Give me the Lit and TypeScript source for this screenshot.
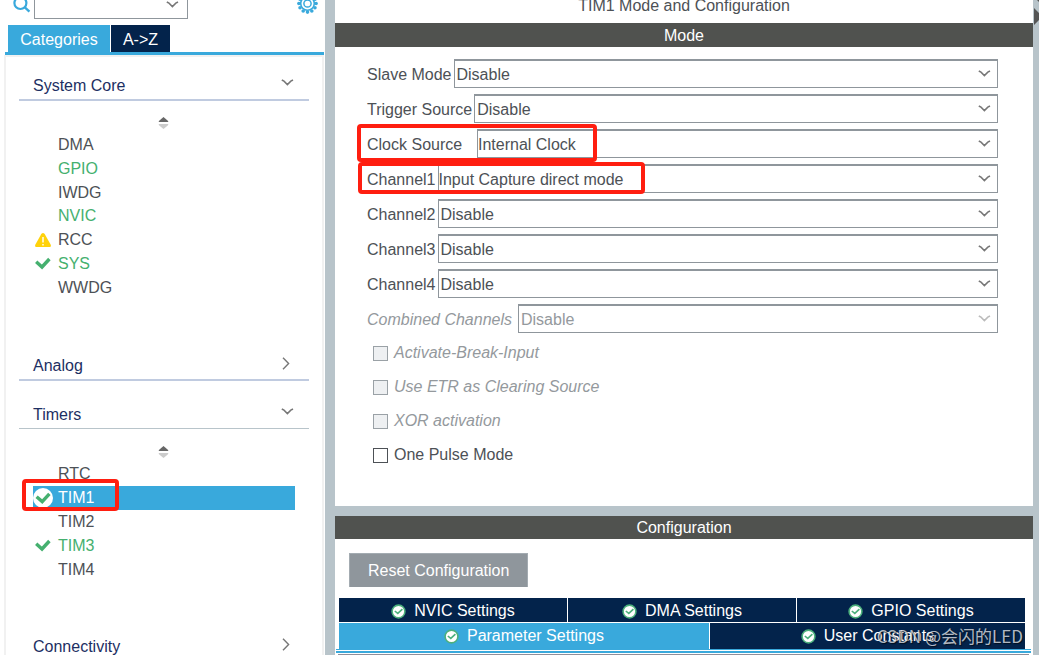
import { LitElement, html, css, svg, nothing } from "lit";
import { customElement, property, state } from "lit/decorators.js";
import { classMap } from "lit/directives/class-map.js";

type Status = "none" | "ok" | "warn";

interface Peripheral {
  name: string;
  enabled?: boolean;
  status?: Status;
}

interface ModeField {
  id: string;
  label: string;
  value: string;
  disabled?: boolean;
  wide?: boolean;
  mark?: string;
}

const SYSTEM_CORE: Peripheral[] = [
  { name: "DMA" },
  { name: "GPIO", enabled: true },
  { name: "IWDG" },
  { name: "NVIC", enabled: true },
  { name: "RCC", status: "warn" },
  { name: "SYS", enabled: true, status: "ok" },
  { name: "WWDG" },
];

const TIMERS: Peripheral[] = [
  { name: "RTC" },
  { name: "TIM1", enabled: true, status: "ok" },
  { name: "TIM2" },
  { name: "TIM3", enabled: true, status: "ok" },
  { name: "TIM4" },
];

const FIELDS: ModeField[] = [
  { id: "slave", label: "Slave Mode", value: "Disable" },
  { id: "trigger", label: "Trigger Source", value: "Disable" },
  { id: "clock", label: "Clock Source", value: "Internal Clock", wide: true, mark: "mark-clock" },
  { id: "ch1", label: "Channel1", value: "Input Capture direct mode", mark: "mark-channel" },
  { id: "ch2", label: "Channel2", value: "Disable" },
  { id: "ch3", label: "Channel3", value: "Disable" },
  { id: "ch4", label: "Channel4", value: "Disable" },
  { id: "combined", label: "Combined Channels", value: "Disable", disabled: true },
];

const CHECKS = [
  { id: "brk", label: "Activate-Break-Input", disabled: true },
  { id: "etr", label: "Use ETR as Clearing Source", disabled: true },
  { id: "xor", label: "XOR activation", disabled: true },
  { id: "opm", label: "One Pulse Mode", disabled: false },
];

const chevronDown = html`<svg class="chev" width="13" height="8" viewBox="0 0 13 8" aria-hidden="true">
  <path d="M0.8 1 L3 2.2 L6.4 5.6 L9.8 2.2 L12 1" fill="none" stroke="currentColor" stroke-width="1.5" />
</svg>`;

const chevronRight = html`<svg class="chev-right" width="8" height="13" viewBox="0 0 8 13" aria-hidden="true">
  <path d="M1 0.8 L6.6 6.5 L1 12.2" fill="none" stroke="currentColor" stroke-width="1.4" />
</svg>`;

const tick = html`<svg width="16" height="14" viewBox="0 0 16 14" aria-hidden="true">
  <path d="M1.2 5.8 L7 11 L14.4 3" fill="none" stroke="#45b06f" stroke-width="3.4" />
</svg>`;

const tickDisc = html`<svg width="20" height="20" viewBox="0 0 20 20" aria-hidden="true">
  <circle cx="10" cy="10" r="10" fill="#fff" />
  <path d="M3.6 8.8 L9.2 13.6 L16.4 5.8" fill="none" stroke="#45b06f" stroke-width="3.4" />
</svg>`;

const warning = html`<svg width="16" height="14" viewBox="0 0 16 14" aria-hidden="true">
  <path d="M8 0 C9 0 9.6 0.8 10 1.5 L15.6 11.5 C16.3 13 15.8 14 14.4 14 H1.6 C0.2 14 -0.3 13 0.4 11.5 L6 1.5 C6.4 0.8 7 0 8 0 Z" fill="#ffd20a" />
  <path d="M8 4 V9.6 M8 11 V12.6" stroke="#fff" stroke-width="1.4" />
</svg>`;

const okBadge = html`<svg width="15" height="15" viewBox="0 0 15 15" aria-hidden="true">
  <circle cx="7.5" cy="7.5" r="6.4" fill="#fff" stroke="#4cb07c" stroke-width="1.6" />
  <path d="M3.8 7 L6.8 9.4 L11.4 5.2" fill="none" stroke="#4cb07c" stroke-width="1.6" />
</svg>`;

const gearTeeth = Array.from({ length: 12 }, (_, i) => {
  const a = (i * Math.PI) / 6;
  return svg`<circle cx=${10.5 + 8.6 * Math.cos(a)} cy=${10.5 + 8.6 * Math.sin(a)} r="1.8" />`;
});

@customElement("category-panel")
export class CategoryPanel extends LitElement {
  @state() private selected = "TIM1";

  static styles = css`
    :host { display: flex; flex-direction: column; min-width: 0; background: #fff; overflow: hidden; }
    button { font: inherit; color: inherit; background: none; border: 0; margin: 0; padding: 0; text-align: left; }
    .search { display: flex; align-items: flex-start; flex: none; height: 25px; padding: 0 7px 0 13px; }
    .search-icon { flex: none; margin-right: 3px; }
    .combo { display: grid; width: 154px; height: 19px; box-sizing: border-box; border: solid #8f969c; border-width: 0 1px 1px; }
    .combo select { grid-area: 1 / 1; appearance: none; border: 0; background: none; font: inherit; min-width: 0; }
    .combo .chev { grid-area: 1 / 1; justify-self: end; margin: 1px 8px 0 0; color: #777; pointer-events: none; }
    .gear { margin-left: auto; height: 14px; }
    .tabs { display: flex; gap: 1px; flex: none; margin: 0 0 0 8px; }
    .tab { height: 27px; line-height: 29px; color: #fff; background: #03234b; text-align: center; width: 59px; }
    .tab.active { background: #39a9dc; width: 102px; }
    .rule { flex: none; height: 3px; background: #39a9dc; margin: 0 1px 0 5px; }
    .body { flex: 1; min-height: 0; overflow: hidden; margin: 0 1px 0 4px; padding: 16px 13px 0; border: solid #f1f1f1; border-width: 2px 2px 0 2px; }
    .head { display: flex; justify-content: space-between; align-items: flex-start; width: 100%; height: 28px; box-sizing: border-box; padding: 0 15px 0 14px; line-height: 25px; color: #1d2f63; border-bottom: 2px solid #c0cbe0; }
    .head .chev { margin-top: 6px; color: #777; }
    .head .chev-right { margin: 4px 4px 0 0; color: #777; }
    .thin { border-bottom: 1px solid #b8c4ca; margin-bottom: 1px; height: 27px; }
    .spin { display: flex; justify-content: center; align-items: center; width: 100%; height: 32px; padding: 11px 2px 0 0; box-sizing: border-box; }
    .list { display: grid; grid-auto-rows: 1fr; margin: 0 14px; padding: 0; list-style: none; }
    .seven { height: 166px; margin-bottom: 54px; }
    .five { height: 119px; margin-bottom: 53px; }
    .gap { margin-bottom: 21px; }
    .row { position: relative; display: flex; }
    .item { display: grid; grid-template-columns: 20px 1fr; column-gap: 5px; align-items: center; width: 100%; line-height: 20px; color: #4d5156; }
    .name { padding-top: 1px; }
    .icon { display: flex; justify-content: center; }
    .enabled { color: #45b06f; }
    .selected { background: #39a9dc; color: #fff; }
    .mark { position: absolute; left: -11px; top: -7px; width: 97px; height: 32px; box-sizing: border-box; border: 4px solid #ff1e10; border-radius: 4px; pointer-events: none; z-index: 1; }
  `;

  private icon(p: Peripheral) {
    if (p.status === "warn") return warning;
    if (p.status === "ok") return p.name === this.selected ? tickDisc : tick;
    return nothing;
  }

  private list(items: Peripheral[], cls: string) {
    return html`
      <button class="spin" aria-label="Sort">
        <svg width="11" height="12" viewBox="0 0 11 12" aria-hidden="true">
          <path d="M5.5 0 L9.5 3.4 L10.5 5 H0.5 L1.5 3.4 Z" fill="#666" />
          <path d="M5.5 12 L9.5 8.8 L10.5 7 H0.5 L1.5 8.8 Z" fill="#ccc" />
        </svg>
      </button>
      <ul class="list ${cls}">
        ${items.map((p) => html`<li class="row">
          <button
            class=${classMap({ item: true, enabled: !!p.enabled, selected: p.name === this.selected })}
            @click=${() => (this.selected = p.name)}
          ><span class="icon">${this.icon(p)}</span><span class="name">${p.name}</span></button>
          ${p.name === "TIM1" ? html`<span class="mark"></span>` : nothing}
        </li>`)}
      </ul>`;
  }

  render() {
    return html`
      <div class="search">
        <svg class="search-icon" width="18" height="14" viewBox="0 0 18 14" aria-hidden="true">
          <circle cx="7.4" cy="3" r="6" fill="none" stroke="#39a9dc" stroke-width="2.2" />
          <path d="M11.6 7.2 L16.4 11.6" stroke="#39a9dc" stroke-width="2.4" />
        </svg>
        <div class="combo"><select aria-label="Search"><option></option></select>${chevronDown}</div>
        <button class="gear" aria-label="Settings">
          <svg width="21" height="14" viewBox="0 7 21 14" aria-hidden="true">
            <g fill="#39a9dc">${gearTeeth}</g>
            <circle cx="10.5" cy="10.5" r="6.8" fill="#fff" stroke="#39a9dc" stroke-width="1.6" />
            <circle cx="10.5" cy="10.5" r="3.6" fill="none" stroke="#39a9dc" stroke-width="1.5" />
          </svg>
        </button>
      </div>
      <div class="tabs" role="tablist">
        <button class="tab active" role="tab">Categories</button>
        <button class="tab" role="tab">A-&gt;Z</button>
      </div>
      <div class="rule"></div>
      <div class="body">
        <button class="head">System Core${chevronDown}</button>
        ${this.list(SYSTEM_CORE, "seven")}
        <button class="head gap">Analog${chevronRight}</button>
        <button class="head thin">Timers${chevronDown}</button>
        ${this.list(TIMERS, "five")}
        <button class="head">Connectivity${chevronRight}</button>
      </div>`;
  }
}

@customElement("mode-form")
export class ModeForm extends LitElement {
  @property({ attribute: false }) fields: ModeField[] = [];

  static styles = css`
    :host { display: block; padding: 12px 35px 0 32px; }
    .field { position: relative; display: flex; align-items: center; gap: 2px; height: 29px; margin-bottom: 6px; color: #4d5156; }
    .name { white-space: nowrap; line-height: 20px; padding-top: 2px; }
    .wide { min-width: 108px; }
    .box { flex: 1; min-width: 0; display: grid; align-items: center; height: 29px; box-sizing: border-box; border: 1px solid #8f969c; border-top-width: 2px; }
    .box select { grid-area: 1 / 1; appearance: none; width: 100%; height: 26px; border: 0; margin: 0; padding: 0 30px 0 2px; background: none; font: inherit; color: inherit; opacity: 1; }
    .box.tight select { padding-left: 0; }
    .box .chev { grid-area: 1 / 1; justify-self: end; margin-right: 6px; color: #777; pointer-events: none; }
    .field.off { gap: 6px; }
    .off { color: #94999d; }
    .off .name { font-style: italic; }
    .off .chev { color: #bbb; }
    .check { display: flex; align-items: center; gap: 6px; height: 20px; margin: 0 0 14px 6px; color: #4d5156; line-height: 20px; }
    .check:first-of-type { margin-top: 10px; }
    .check input { appearance: none; width: 15px; height: 15px; box-sizing: border-box; margin: 0; border: 1px solid #4d5156; background: #fff; }
    .check.off { color: #94999d; font-style: italic; }
    .check.off input { border-color: #9aa1a6; background: #eef0f2; }
    .mark { position: absolute; box-sizing: border-box; border: 4px solid #ff1e10; border-radius: 4px; pointer-events: none; z-index: 1; }
    .mark-clock { left: -10px; top: -5px; width: 240px; height: 38px; }
    .mark-channel { left: -9px; top: -2px; width: 287px; height: 32px; }
  `;

  render() {
    return html`
      ${this.fields.map((f) => html`<div class=${classMap({ field: true, off: !!f.disabled })}>
        <label class=${classMap({ name: true, wide: !!f.wide })} for=${f.id}>${f.label}</label>
        <div class=${classMap({ box: true, tight: !!f.mark })}>
          <select id=${f.id} ?disabled=${!!f.disabled}><option>${f.value}</option></select>${chevronDown}
        </div>
        ${f.mark ? html`<span class="mark ${f.mark}"></span>` : nothing}
      </div>`)}
      <div class="checks">
        ${CHECKS.map((c) => html`<div class=${classMap({ check: true, off: c.disabled })}>
          <input type="checkbox" id=${c.id} ?disabled=${c.disabled} /><label for=${c.id}>${c.label}</label>
        </div>`)}
      </div>`;
  }
}

@customElement("app-root")
export class AppRoot extends LitElement {
  static styles = css`
    :host { display: grid; grid-template-columns: 325px minmax(0, 1fr) 6px; height: 100vh; overflow: hidden; position: relative; background: #b8c4ca; font: 16px "Liberation Sans", Arial, sans-serif; color: #4d5156; }
    button { font: inherit; color: #fff; border: 0; margin: 0; padding: 0; }
    .main { display: flex; flex-direction: column; gap: 10px; min-width: 0; min-height: 0; margin-left: 10px; }
    .mode { background: #fff; flex: none; padding-bottom: 27px; }
    .title { margin: 0; height: 23px; font: inherit; line-height: 12px; text-align: center; }
    .bar { margin: 0; height: 24px; font: inherit; line-height: 25px; text-align: center; color: #fff; background: #50524f; }
    .config { background: #fff; flex: 1; min-height: 0; overflow: hidden; }
    .config .bar { height: 23px; line-height: 24px; }
    .reset { display: block; margin: 14px 0 11px 14px; height: 34px; padding: 0 18px; line-height: 34px; background: #8f969c; border: 1px solid #a3abb1; border-bottom: 0; }
    .tabs { display: grid; gap: 1px; margin: 0 8px 0 4px; }
    .line { display: grid; gap: 1px; grid-template-columns: repeat(3, 1fr); height: 24px; }
    .line.two { grid-template-columns: 54fr 46fr; height: 26px; }
    .tab { display: flex; align-items: center; justify-content: center; gap: 8px; background: #03234b; }
    .line.one .tab { padding-top: 2px; }
    .tab.active { background: #39a9dc; }
    .edge { height: 1px; border: solid #39a9dc; border-width: 1px 0 2px; margin: 0 2px 1px 1px; }
    .table-top { height: 20px; border-top: 1px solid #8f8f9b; margin: 0 4px 0 3px; }
    .collapse { display: block; width: 6px; height: 26px; background: none; }
    .watermark { position: absolute; right: 16px; bottom: 7px; font: 17px/24px "Noto Sans CJK SC", sans-serif; color: rgba(225, 228, 232, 0.8); text-shadow: 1px 1px 1px rgba(0, 0, 0, 0.6); pointer-events: none; }
  `;

  private tab(label: string, active = false) {
    return html`<button role="tab" class=${classMap({ tab: true, active })}>${okBadge}<span>${label}</span></button>`;
  }

  render() {
    return html`
      <category-panel></category-panel>
      <main class="main">
        <section class="mode">
          <h1 class="title">TIM1 Mode and Configuration</h1>
          <h2 class="bar">Mode</h2>
          <mode-form .fields=${FIELDS}></mode-form>
        </section>
        <section class="config">
          <h2 class="bar">Configuration</h2>
          <button class="reset">Reset Configuration</button>
          <div class="tabs" role="tablist">
            <div class="line one">${this.tab("NVIC Settings")}${this.tab("DMA Settings")}${this.tab("GPIO Settings")}</div>
            <div class="line two">${this.tab("Parameter Settings", true)}${this.tab("User Constants")}</div>
          </div>
          <div class="edge"></div>
          <div class="table-top"></div>
        </section>
      </main>
      <button class="collapse" aria-label="Expand">
        <svg width="6" height="26" viewBox="0 0 6 26" aria-hidden="true">
          <path d="M1 8 L6 13 V20 L1 25 Z M4 0 H6 V2 Z" fill="#555" />
        </svg>
      </button>
      <div class="watermark">CSDN @会闪的LED</div>`;
  }
}
